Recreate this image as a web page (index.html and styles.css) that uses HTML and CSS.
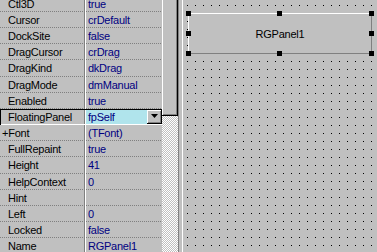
FILE: index.html
```html
<!DOCTYPE html>
<html lang="pt-BR">
<head>
  <meta charset="UTF-8">
  <meta name="viewport" content="width=device-width, initial-scale=1.0">
  <title>Object Inspector</title>
  <link rel="stylesheet" href="styles.css">
</head>
<body>
  <!-- Inspetor de objetos -->
  <div id="inspetor">
    <div class="grade">
      <div class="linha"><span class="nome">Ctl3D</span><span class="valor">true</span></div>
      <div class="linha"><span class="nome">Cursor</span><span class="valor">crDefault</span></div>
      <div class="linha"><span class="nome">DockSite</span><span class="valor">false</span></div>
      <div class="linha"><span class="nome">DragCursor</span><span class="valor">crDrag</span></div>
      <div class="linha"><span class="nome">DragKind</span><span class="valor">dkDrag</span></div>
      <div class="linha"><span class="nome">DragMode</span><span class="valor">dmManual</span></div>
      <div class="linha"><span class="nome">Enabled</span><span class="valor">true</span></div>
      <div class="linha selecionada">
        <span class="nome">FloatingPanel</span>
        <span class="valor edicao">fpSelf
          <span class="seta">
            <svg width="7" height="4" viewBox="0 0 7 4"><path d="M0 0h7L3.5 4z" fill="#000"/></svg>
          </span>
        </span>
      </div>
      <div class="linha"><span class="nome sub">+Font</span><span class="valor">(TFont)</span></div>
      <div class="linha"><span class="nome">FullRepaint</span><span class="valor">true</span></div>
      <div class="linha"><span class="nome">Height</span><span class="valor">41</span></div>
      <div class="linha"><span class="nome">HelpContext</span><span class="valor">0</span></div>
      <div class="linha"><span class="nome">Hint</span><span class="valor"></span></div>
      <div class="linha"><span class="nome">Left</span><span class="valor">0</span></div>
      <div class="linha"><span class="nome">Locked</span><span class="valor">false</span></div>
      <div class="linha"><span class="nome">Name</span><span class="valor">RGPanel1</span></div>
    </div>
    <div class="barra-rolagem">
      <div class="cursor-rolagem"></div>
    </div>
  </div>

  <div class="divisor"></div>

  <!-- Formulario em modo de design -->
  <div id="formulario">
    <div class="painel">
      RGPanel1
      <span class="alca tl"></span>
      <span class="alca tm"></span>
      <span class="alca tr"></span>
      <span class="alca ml"></span>
      <span class="alca mr"></span>
      <span class="alca bl"></span>
      <span class="alca bm"></span>
      <span class="alca br"></span>
    </div>
  </div>
</body>
</html>
```

FILE: styles.css
```css
body {
  margin: 0;
  padding: 0;
  width: 377px;
  height: 252px;
  overflow: hidden;
  display: flex;
  background: #c0c0c0;
  font-family: "Liberation Sans", Arial, sans-serif;
  font-size: 11px;
  letter-spacing: -0.25px;
}

#inspetor {
  display: flex;
  width: 178px;
  flex-shrink: 0;
}

.grade {
  width: 162px;
  margin-top: -4.17px;
}

/* cada propriedade com linha pontilhada embaixo */
.linha {
  display: flex;
  height: 16.17px;
  box-sizing: border-box;
  line-height: 15px;
  background: linear-gradient(to right, #808080 1px, transparent 1px) 0 100% / 2px 1px repeat-x;
}

.nome {
  width: 85px;
  box-sizing: border-box;
  padding: 1px 0 0 8px;
  border-right: 1px solid #808080;
  color: #000;
  white-space: nowrap;
}

.nome.sub {
  padding-left: 2px;
}

.valor {
  flex: 1;
  padding: 1px 0 0 2px;
  border-left: 1px solid #fff;
  color: #000080;
  white-space: nowrap;
}

/* linha selecionada (afundada) */
.linha.selecionada {
  background: #c0c0c0;
  padding: 1px 0 1px 1px;
  box-shadow: inset 1px 1px #000, inset 0 -1px #fff;
}

.linha.selecionada .nome {
  width: 84px;
  padding-top: 0;
  padding-left: 7px;
}

.valor.edicao {
  display: flex;
  justify-content: space-between;
  background: #b0e4ec;
  padding-top: 0;
  padding-right: 0;
  line-height: 14px;
}

.seta {
  width: 15px;
  height: 14px;
  box-sizing: border-box;
  background: #c0c0c0;
  border-right: 1px solid #000;
  border-bottom: 1px solid #000;
  box-shadow: inset 1px 1px #fff, inset -1px -1px #808080;
  display: flex;
  align-items: center;
  justify-content: center;
}

.barra-rolagem {
  width: 16px;
  background: repeating-conic-gradient(#c0c0c0 0 25%, #fff 0 50%) 0 0 / 2px 2px;
}

.cursor-rolagem {
  height: 116px;
  box-sizing: border-box;
  background: #c0c0c0;
  border-right: 1px solid #000;
  border-bottom: 1px solid #000;
  box-shadow: inset 1px 0 #fff, inset -1px -1px #808080;
}

.divisor {
  width: 5px;
  flex-shrink: 0;
  box-sizing: border-box;
  border-left: 1px solid #808080;
  border-right: 1px solid #fff;
}

/* grade de pontos do design */
#formulario {
  flex: 1;
  position: relative;
  background-color: #c0c0c0;
  background-image:
    linear-gradient(to right, transparent 1px, #c0c0c0 1px),
    linear-gradient(#000 1px, transparent 1px);
  background-size: 8px 8px;
  background-position: 4px 5px;
}

.painel {
  position: absolute;
  left: 5px;
  top: 13px;
  width: 184px;
  height: 41px;
  box-sizing: border-box;
  background: #c0c0c0;
  border-top: 1px solid #fff;
  border-left: 1px solid #fff;
  border-right: 1px solid #808080;
  border-bottom: 1px solid #808080;
  display: flex;
  align-items: center;
  justify-content: center;
  color: #000;
}

.alca {
  position: absolute;
  width: 5px;
  height: 5px;
  background: #000;
}

.alca.tl { left: -3px; top: -3px; }
.alca.tm { left: calc(50% - 3px); top: -3px; }
.alca.tr { right: -3px; top: -3px; }
.alca.ml { left: -3px; top: calc(50% - 2.5px); }
.alca.mr { right: -3px; top: calc(50% - 2.5px); }
.alca.bl { left: -3px; bottom: -3px; }
.alca.bm { left: calc(50% - 3px); bottom: -3px; }
.alca.br { right: -3px; bottom: -3px; }
```
